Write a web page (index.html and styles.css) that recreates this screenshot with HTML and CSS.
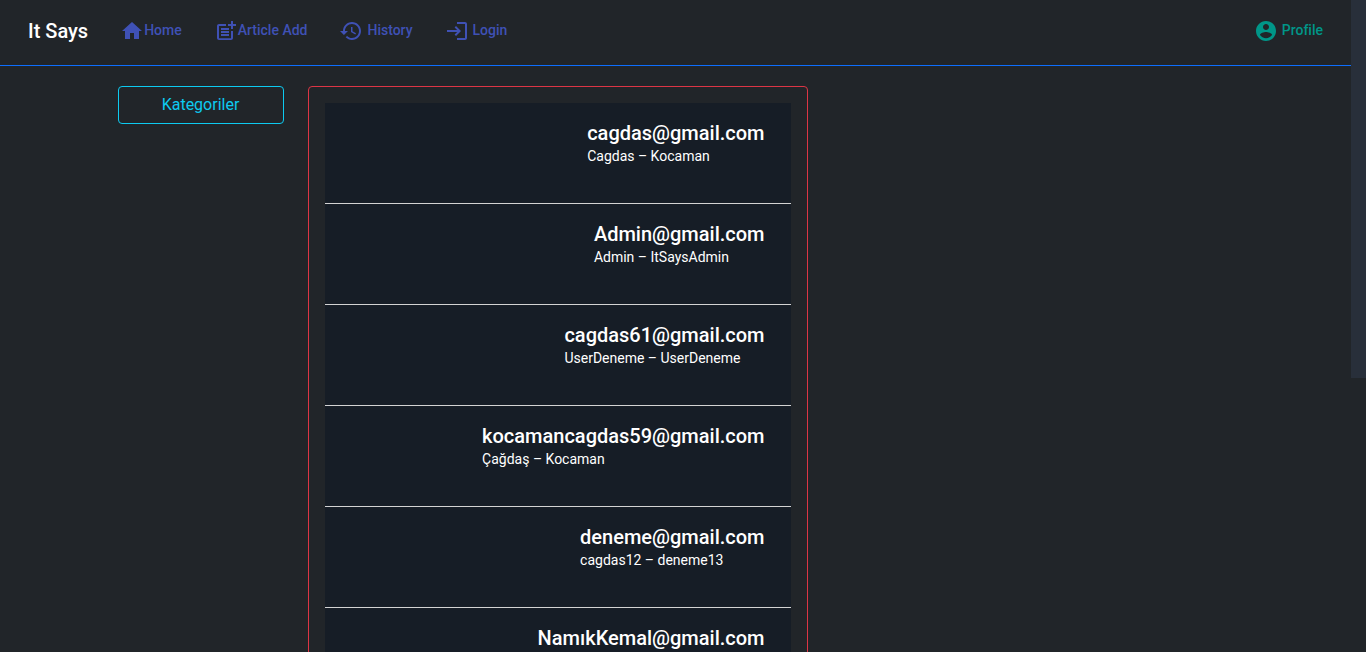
FILE: index.html
```html
<!DOCTYPE html>
<html lang="tr">
<head>
<meta charset="utf-8">
<meta name="viewport" content="width=device-width, initial-scale=1">
<title>It Says</title>
<link rel="stylesheet" href="styles.css">
</head>
<body>
<div class="shell">
  <div class="page">
    <header class="navbar">
      <a class="brand" href="#">It Says</a>
      <nav class="links">
        <a class="link link-tight" href="#"><svg class="icon" viewBox="0 0 24 24"><path d="M10 20v-6h4v6h5v-8h3L12 3 2 12h3v8z"/></svg>Home</a>
        <a class="link link-tight" href="#"><svg class="icon" viewBox="0 0 24 24"><path d="M17 19.22H5V7h7V5H5c-1.1 0-2 .9-2 2v12c0 1.1.9 2 2 2h12c1.1 0 2-.9 2-2v-7h-2v7.22z"/><path d="M19 2h-2v3h-3v2h3v3h2V7h3V5h-3V2zM7 9h8v2H7zM7 12v2h8v-2H7zM7 15h8v2H7z"/></svg>Article Add</a>
        <a class="link" href="#"><svg class="icon" viewBox="0 0 24 24"><path d="M13 3c-4.97 0-9 4.03-9 9H1l3.89 3.89.07.14L9 12H6c0-3.87 3.13-7 7-7s7 3.13 7 7-3.13 7-7 7c-1.93 0-3.68-.79-4.94-2.06l-1.42 1.42C8.27 19.99 10.51 21 13 21c4.97 0 9-4.03 9-9s-4.03-9-9-9zm-1 5v5l4.28 2.54.72-1.21-3.5-2.08V8H12z"/></svg>History</a>
        <a class="link" href="#"><svg class="icon" viewBox="0 0 24 24"><path d="M11 7 9.6 8.4l2.6 2.6H2v2h10.2l-2.6 2.6L11 17l5-5-5-5zm9 12h-8v2h8c1.1 0 2-.9 2-2V5c0-1.1-.9-2-2-2h-8v2h8v14z"/></svg>Login</a>
      </nav>
      <a class="link link-profile" href="#"><svg class="icon" viewBox="0 0 24 24"><path d="M12 2C6.48 2 2 6.48 2 12s4.48 10 10 10 10-4.48 10-10S17.52 2 12 2zm0 3c1.66 0 3 1.34 3 3s-1.34 3-3 3-3-1.34-3-3 1.34-3 3-3zm0 14.2c-2.5 0-4.71-1.28-6-3.22.03-1.99 4-3.08 6-3.08 1.99 0 5.97 1.09 6 3.08-1.29 1.94-3.5 3.22-6 3.22z"/></svg>Profile</a>
    </header>
    <main class="container">
      <aside class="sidebar"><button class="category" type="button">Kategoriler</button></aside>
      <section class="card">
        <ul class="users">
          <li class="user"><div><h2 class="email">cagdas@gmail.com</h2><p class="name">Cagdas – Kocaman</p></div></li>
          <li class="user"><div><h2 class="email">Admin@gmail.com</h2><p class="name">Admin – ItSaysAdmin</p></div></li>
          <li class="user"><div><h2 class="email">cagdas61@gmail.com</h2><p class="name">UserDeneme – UserDeneme</p></div></li>
          <li class="user"><div><h2 class="email">kocamancagdas59@gmail.com</h2><p class="name">Çağdaş – Kocaman</p></div></li>
          <li class="user"><div><h2 class="email">deneme@gmail.com</h2><p class="name">cagdas12 – deneme13</p></div></li>
          <li class="user"><div><h2 class="email">NamıkKemal@gmail.com</h2></div></li>
        </ul>
      </section>
    </main>
  </div>
  <div class="scroll-track"><div class="scroll-thumb"></div></div>
</div>
</body>
</html>
```
FILE: styles.css
```css
*, *::before, *::after {
  box-sizing: border-box;
}

body {
  margin: 0;
  background: #212529;
  color: #fff;
  font-family: Roboto, "Liberation Sans", sans-serif;
}

.shell {
  display: flex;
  height: 100vh;
  overflow: hidden;
}

.page {
  flex: 1;
  min-width: 0;
  overflow: hidden;
}

.scroll-track {
  width: 15px;
}

.scroll-thumb {
  height: 58%;
  background: #282f3a;
}

.navbar {
  display: flex;
  align-items: center;
  padding: 15px 28px 18px;
  border-bottom: 1px solid #0d6efd;
}

.brand {
  color: #fff;
  font-size: 20px;
  font-weight: 500;
  line-height: 32px;
  text-decoration: none;
}

.links {
  display: flex;
  flex: 1;
  gap: 32px;
  margin-left: 32px;
}

.link {
  display: flex;
  align-items: center;
  gap: 4px;
  color: #3f51b5;
  font-size: 14px;
  font-weight: 500;
  line-height: 22px;
  padding-bottom: 2px;
  text-decoration: none;
}

.link-tight {
  gap: 0;
}

.link-profile {
  color: #009688;
}

.icon {
  width: 24px;
  height: 24px;
  margin-top: 2px;
  fill: currentColor;
}

.container {
  display: flex;
  gap: 24px;
  max-width: 1140px;
  margin: 20px auto 0;
  padding: 0 12px;
}

.sidebar {
  width: 166px;
}

.category {
  width: 100%;
  padding: 6px 12px;
  border: 1px solid #0dcaf0;
  border-radius: 4px;
  background: transparent;
  color: #0dcaf0;
  font: 400 16px/24px Roboto, "Liberation Sans", sans-serif;
}

.card {
  width: 500px;
  padding: 16px;
  border: 1px solid #dc3545;
  border-radius: 4px;
}

.users {
  margin: 0;
  padding: 0;
  list-style: none;
}

.user {
  display: flex;
  justify-content: flex-end;
  min-height: 101px;
  padding: 18px 26px;
  border-bottom: 1px solid #d3d3d3;
  background: #161d26;
}

.email {
  margin: 0;
  font-size: 20px;
  font-weight: 500;
  line-height: 24px;
}

.name {
  margin: 0;
  font-size: 14px;
  font-weight: 400;
  line-height: 22px;
}
```
